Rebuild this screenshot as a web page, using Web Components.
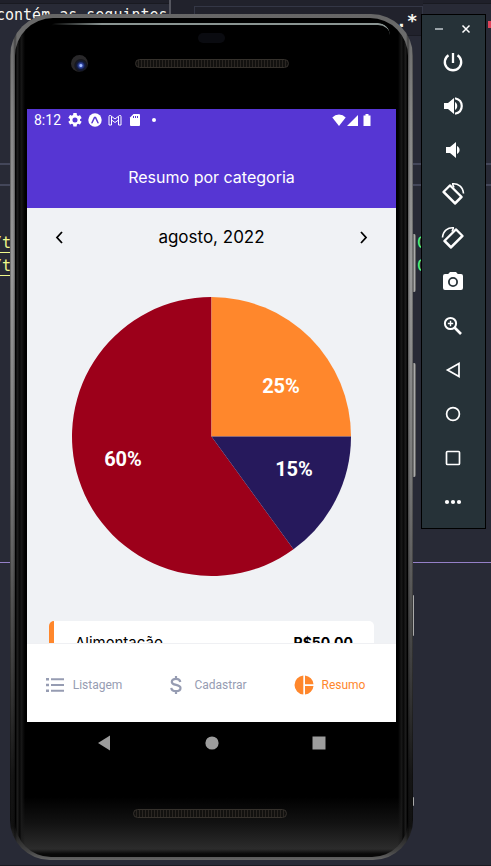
<!DOCTYPE html>
<html lang="pt-BR">
<head>
<meta charset="utf-8">
<meta name="viewport" content="width=device-width, initial-scale=1">
<title>Resumo por categoria</title>
<style>
html, body { margin: 0; height: 100%; background: #282a36; font-family: Roboto, sans-serif; }
</style>
</head>
<body>
<desktop-scene>
  <editor-backdrop slot="backdrop"></editor-backdrop>
  <phone-shell>
    <status-bar></status-bar>
    <app-header>Resumo por categoria</app-header>
    <category-summary month="agosto, 2022">
      <pie-chart></pie-chart>
      <history-card label="Alimentação" amount="R$50,00" color="#ff872c"></history-card>
    </category-summary>
    <tab-bar>
      <tab-item icon="list">Listagem</tab-item>
      <tab-item icon="money">Cadastrar</tab-item>
      <tab-item icon="pie" active>Resumo</tab-item>
    </tab-bar>
  </phone-shell>
  <emulator-toolbar></emulator-toolbar>
</desktop-scene>
<script>
const define = (name, html, setup) => customElements.define(name, class extends HTMLElement {
  constructor() {
    super();
    const t = document.createElement('template');
    t.innerHTML = html;
    this.attachShadow({ mode: 'open' }).append(t.content.cloneNode(true));
  }
  connectedCallback() { if (setup) setup(this, this.shadowRoot); }
});

define('desktop-scene', `<style>
:host { display: flex; position: relative; box-sizing: border-box; height: 100vh; padding: 14px 5px 6px 10px; gap: 8px; align-items: flex-start; overflow: hidden; }
</style><slot name="backdrop"></slot><slot></slot>`);

define('editor-backdrop', `<style>
:host { position: absolute; inset: 0; overflow: hidden; background: #282a36; font: 15px/22px "DejaVu Sans Mono", monospace; color: #f8f8f2; }
div, span { position: absolute; white-space: pre; }
.top { inset: 0 0 auto; height: 3px; background: #1f202a; border-bottom: 1px solid #191a21; }
.text { left: -4px; top: 4px; }
.split { left: 169px; top: 0; width: 2px; height: 16px; background: #55565f; }
.find { left: 171px; right: 68px; top: 0; height: 35px; background: #21222c; border-bottom: 1px solid #1a1b23; }
.find i { position: absolute; inset: 6px 0 0 23px; border: 1px solid #343746; border-bottom: 0; }
.regex { left: 396px; top: 10px; font-weight: bold; font-size: 18px; }
.rule { left: 0; right: 0; height: 2px; background: #44475a; }
.code { left: -7px; color: #f1fa8c; text-decoration: underline; text-underline-offset: 4px; }
.end { left: 417px; color: #50fa7b; }
.mark { right: 0; top: 21px; width: 3px; height: 7px; background: #e0445a; }
.purple { left: 0; right: 0; top: 562px; height: 1px; background: #9580c8; }
.foot { left: 0; right: 0; bottom: 0; height: 1px; background: #191a21; }
</style>
<div class="top"></div><div class="find"><i></i></div><div class="split"></div>
<span class="text">contém as seguintes</span><span class="regex">.*</span>
<div class="mark"></div>
<div class="rule" style="top:163px"></div><div class="rule" style="top:184px"></div>
<span class="code" style="top:232px">/t</span><span class="code" style="top:255px">/t</span>
<span class="end" style="top:232px">C</span><span class="end" style="top:255px">C</span>
<div class="purple"></div><div class="foot"></div>`);

define('phone-shell', `<style>
:host { display: block; position: relative; flex: 1; min-width: 0; height: 100%; }
.edge { box-sizing: border-box; height: 100%; padding: 4px 5px 3px; border-radius: 42px 42px 40px 40px;
  background: linear-gradient(90deg, #0008 0, #0000 1px 3px, #0006 5px, #0000 7px calc(100% - 7px), #0006 calc(100% - 5px), #0000 calc(100% - 3px) calc(100% - 1px), #0008 100%),
    linear-gradient(#666 0, #858585 12%, #999 30%, #777 55%, #3c3c3c 78%, #151515 90%, #111 96%, #444 99%, #666); }
.face { position: relative; box-sizing: border-box; display: flex; flex-direction: column; height: 100%; padding: 0 12px; border-radius: 38px 38px 36px 36px; overflow: hidden;
  background: linear-gradient(90deg, #000 0 1px, #202020 2px, #050505 5px, #1a1a1a 6px, #0000 10px calc(100% - 10px), #1a1a1a calc(100% - 6px), #050505 calc(100% - 5px), #202020 calc(100% - 2px), #000 calc(100% - 1px)),
    linear-gradient(#000 0 calc(100% - 60px), #121212 calc(100% - 34px), #2c2c2c calc(100% - 8px), #080808 calc(100% - 3px)); }
.gloss { position: absolute; inset: 5px 18px auto 36px; height: 10px; border-top: 2px solid #8a9492; border-radius: 12px 34px 0 0; mask-image: linear-gradient(90deg, #0000, #000 15%); }
.top { display: grid; grid-template-columns: 1fr 154px 1fr; align-items: center; height: 91px; flex: none; }
.camera { justify-self: center; width: 17px; height: 17px; margin-right: 2px; border-radius: 50%; background: radial-gradient(circle at 58% 62%, #a5bfff 0 1px, #3348a8 2px, #111a3c 4px, #17171b 6px, #29282a 7px); }
.sensor { justify-self: center; width: 27px; height: 10px; border-radius: 5px; background: #0a0b10; }
.middle { display: grid; gap: 16px; padding-bottom: 26px; }
.speaker { width: 152px; height: 7px; border: 1px solid #35312c; border-radius: 5px; background: repeating-linear-gradient(90deg, #12110f 0 2px, #2a2622 2px 3px); }
.screen { flex: 1; min-height: 0; display: flex; flex-direction: column; background: #f0f2f5; overflow: hidden; }
.keys { display: flex; justify-content: space-between; align-items: center; height: 42px; padding: 0 68px; flex: none; }
.keys button { display: grid; place-items: center; width: 18px; height: 24px; padding: 0; border: 0; background: none; }
.bottom { height: 93px; flex: none; display: grid; justify-content: center; align-content: center; box-sizing: border-box; padding: 6px 4px 0 0; }
svg { display: block; width: 16px; height: 16px; fill: #9d9d9d; }
.nub { position: absolute; left: 100%; width: 3px; background: linear-gradient(90deg, #555, #aaa, #444); border-radius: 0 2px 2px 0; }
</style>
<span class="nub" style="top:220px;height:58px"></span><span class="nub" style="top:349px;height:114px"></span><span class="nub" style="top:581px;height:41px;width:1px"></span><span class="nub" style="top:783px;height:9px;width:1px"></span>
<div class="edge"><div class="face"><div class="gloss"></div>
<div class="top"><span class="camera"></span><div class="middle"><span class="sensor"></span><span class="speaker"></span></div></div>
<div class="screen"><slot></slot></div>
<div class="keys">
<button aria-label="Voltar"><svg viewBox="0 0 16 16"><path d="M2 8 14 .5v15z"/></svg></button>
<button aria-label="Início"><svg viewBox="0 0 16 16"><circle cx="8" cy="8" r="6.6"/></svg></button>
<button aria-label="Recentes"><svg viewBox="0 0 16 16"><path d="M1.5 1.5h13v13h-13z"/></svg></button></div>
<div class="bottom"><span class="speaker"></span></div>
</div></div>`);

define('status-bar', `<style>
:host { display: flex; align-items: center; height: 22px; padding: 0 22px 0 7px; background: #5636d3; color: #fff; font-size: 14px; line-height: 20px; flex: none; }
time { width: 34px; } .left, .right { display: flex; align-items: center; } .left { gap: 6px; } .right { margin-left: auto; }
svg { display: block; width: 14px; height: 14px; fill: #fff; }
</style><time>8:12</time>
<div class="left">
<svg viewBox="2 2 20 20"><path d="M19.14 12.94c.04-.3.06-.61.06-.94s-.02-.64-.07-.94l2.03-1.58c.18-.14.23-.41.12-.61l-1.92-3.32c-.12-.22-.37-.29-.59-.22l-2.39.96c-.5-.38-1.03-.7-1.62-.94l-.36-2.54A.48.48 0 0 0 13.920 2h-3.840c-.24 0-.43.17-.47.41l-.36 2.540c-.59.24-1.130.57-1.620.94l-2.390-.960c-.22-.08-.47 0-.59.22L2.740 8.470c-.12.21-.08.47.12.61l2.030 1.580c-.05.3-.09.63-.09.940s.02.64.07.940l-2.030 1.580c-.18.14-.23.41-.12.61l1.920 3.320c.12.22.37.29.59.22l2.390-.960c.5.38 1.030.7 1.620.940l.36 2.540c.05.24.24.41.48.41h3.840c.24 0 .44-.17.47-.41l.36-2.540c.59-.24 1.130-.56 1.620-.940l2.390.960c.22.08.47 0 .59-.22l1.920-3.320c.12-.22.07-.47-.12-.61zM12 15.600a3.600 3.600 0 1 1 0-7.200 3.600 3.600 0 0 1 0 7.200z"/></svg>
<svg viewBox="0 0 14 14"><circle cx="7" cy="7" r="6.700"/><path d="M4 9.700 6.500 4.500h1L10 9.700" fill="none" stroke="#5636d3" stroke-width="1.500" stroke-linecap="round"/></svg>
<svg viewBox="0 0 14 14"><path d="M1 12V3.500Q1 2 2.500 2.500L7 6l4.500-3.500Q13 2 13 3.500V12h-2.500V7L7 9.500 3.500 7v5zM3.500 7V3.500M10.500 7V3.500" fill="none" stroke="#fff"/></svg>
<svg viewBox="0 0 14 14"><path d="M5.500 1H11a1 1 0 0 1 1 1v10a1 1 0 0 1-1 1H3a1 1 0 0 1-1-1V4.500z"/><path d="M5.500 3v2M7.500 3v2M9.500 3v2" stroke="#5636d3"/></svg>
<svg viewBox="0 0 14 14"><circle cx="6" cy="7" r="2"/></svg></div>
<div class="right"><svg viewBox="0 0 14 14"><path d="M.3 4.500Q3 1.500 7 1.500t6.700 3L7 13z"/></svg>
<svg viewBox="0 0 14 14"><path d="M1 13 12 2v11z"/></svg>
<svg viewBox="0 0 14 14"><path d="M3.500 2.500H5.500V1h3v1.500H10.500v10.500H3.500z"/></svg></div>`);

define('app-header', `<style>
:host { display: block; flex: none; background: #5636d3; }
h1 { margin: 0; padding: 34px 0 19px; font: 400 16px/24px Inter, sans-serif; color: #fff; text-align: center; }
</style><h1><slot></slot></h1>`);

define('category-summary', `<style>
:host { display: block; flex: 1; min-height: 0; overflow: hidden; padding: 0 22px; background: #f0f2f5; }
nav { display: flex; align-items: center; justify-content: space-between; height: 60px; margin-bottom: 29px; }
h2 { margin: 0; padding-bottom: 2px; font: 400 17px/24px Inter, sans-serif; color: #000; }
button { width: 20px; height: 24px; padding: 0; border: 0; background: none; }
svg { display: block; width: 20px; height: 24px; fill: none; stroke: #000; stroke-width: 1.800; }
</style><nav><button aria-label="Mês anterior"><svg viewBox="0 0 20 24"><path d="m13 6-5 5.500 5 5.500"/></svg></button><h2></h2><button aria-label="Próximo mês"><svg viewBox="0 0 20 24"><path d="m7 6 5 5.500-5 5.500"/></svg></button></nav><slot></slot>`,
(el, root) => { root.querySelector('h2').textContent = el.getAttribute('month'); });

define('pie-chart', `<style>
:host { display: block; padding: 0 23px; margin-bottom: 45px; }
svg { display: block; width: 100%; height: auto; }
text { font: 700 20px Roboto, sans-serif; fill: #fff; text-anchor: middle; }
</style><svg viewBox="0 0 279 279" role="img" aria-label="Gastos por categoria">
<path d="M139.500 139.500V0A139.500 139.500 0 1 0 221.500 252.360z" fill="#9c001a"/>
<path d="M139.500 139.500V0A139.500 139.500 0 0 1 279 139.500z" fill="#ff872c"/>
<path d="M139.500 139.500H279A139.500 139.500 0 0 1 221.500 252.360z" fill="#26195c"/>
<text x="209" y="96">25%</text><text x="222" y="179">15%</text><text x="51" y="169">60%</text></svg>`);

define('history-card', `<style>
:host { display: flex; justify-content: space-between; padding: 10px 21px; border-left: 5px solid var(--accent); border-radius: 5px; background: #fff; font: 15px/24px Inter, sans-serif; color: #000; }
strong { font-weight: 700; font-size: 14px; }
</style><span></span><strong></strong>`,
(el, root) => {
  el.style.setProperty('--accent', el.getAttribute('color'));
  root.querySelector('span').textContent = el.getAttribute('label');
  root.querySelector('strong').textContent = el.getAttribute('amount');
});

define('tab-bar', `<style>
:host { display: grid; grid-template-columns: repeat(3, 1fr); flex: none; height: 78px; border-top: 1px solid #eff0f3; background: #fff; }
</style><slot></slot>`);

const tabIcons = {
  list: '<path d="M1 3h3v2.500H1zM1 8.750h3v2.500H1zM1 14.500h3V17H1zM6 3.200h13v2H6zM6 9h13v2H6zM6 14.800h13v2H6z"/>',
  money: '<path d="M10 1v3M10 16v3M14.300 7C14 5 12.500 3.800 10 3.800c-2.600 0-4.200 1.200-4.200 3.100C5.800 11 14.500 8.800 14.500 13c0 2-1.700 3.200-4.500 3.200S5.500 15 5.300 12.900" fill="none" stroke="currentColor" stroke-width="2.200"/>',
  pie: '<path d="M9.300.5v19a9.530 9.530 0 0 1 0-19zM11 .5a9.500 9.500 0 0 1 8.500 8.700H11zM11 10.900h8.500a9.500 9.500 0 0 1-8.500 8.600z"/>'
};
define('tab-item', `<style>
:host { display: flex; color: #969cb2; }
:host([active]) { color: #ff872c; }
button { flex: 1; display: flex; align-items: center; justify-content: center; gap: 8px; padding: 4px 10px 0 0; border: 0; background: none; color: inherit; font: 12px/16px Roboto, sans-serif; }
svg { display: block; width: 20px; height: 20px; fill: currentColor; }
</style><button><svg viewBox="0 0 20 20" aria-hidden="true"></svg><span><slot></slot></span></button>`,
(el, root) => { root.querySelector('svg').innerHTML = tabIcons[el.getAttribute('icon')]; });

define('emulator-toolbar', `<style>
:host { position: relative; display: flex; flex-direction: column; flex: none; box-sizing: border-box; width: 65px; padding: 0 2px 4px 0; border: 1px solid #000; background: #263238; }
.window { display: flex; justify-content: center; gap: 7px; height: 25px; align-items: center; }
button { display: grid; place-items: center; height: 44px; padding: 0; border: 0; background: none; color: #fff; }
.window button { width: 20px; height: 25px; }
svg { display: block; width: 24px; height: 24px; fill: #fff; }
.line { fill: none; stroke: #fff; stroke-width: 2; }
.window svg { width: 14px; height: 14px; fill: none; stroke: #fff; stroke-width: 1.500; }
</style><div class="window"><button aria-label="Minimizar"><svg viewBox="0 0 14 14"><path d="M3 8h8" stroke="#9aa3a8" stroke-width="2"/></svg></button><button aria-label="Fechar"><svg viewBox="0 0 14 14"><path d="m3.500 4.500 7 7m0-7-7 7"/></svg></button></div>
<button aria-label="Ligar"><svg class="line" viewBox="0 0 24 24"><path d="M12 3v10M7.500 5.200a8.200 8.200 0 1 0 9 0" stroke-width="2.300"/></svg></button>
<button aria-label="Aumentar volume"><svg viewBox="0 0 24 24"><path d="M3 9v6h4l6 5V4L7 9zM14 8c3 1.500 3 6.500 0 8z"/><path d="M14 4.200c9 2 9 13.600 0 15.600" fill="none" stroke="#fff" stroke-width="2.200"/></svg></button>
<button aria-label="Diminuir volume"><svg viewBox="0 0 24 24"><path d="M5 9v6h4l6 5V4L9 9zM16 8c3.500 1.500 3.500 6.500 0 8z"/></svg></button>
<button aria-label="Girar à esquerda"><svg viewBox="0 0 24 24"><path d="M8.300 2.600 1.600 9.300a1 1 0 0 0 0 1.400L13.400 22.400a1 1 0 0 0 1.400 0l6.700-6.700a1 1 0 0 0 0-1.400L9.700 2.600a1 1 0 0 0-1.400 0zM9 5l9.800 9.800L14 19.400 4.200 9.700z" fill-rule="evenodd"/><path d="M11 1.800c6-.8 11 3 11.500 9.700M13 5.500 11.500 2" fill="none" stroke="#fff" stroke-width="1.600"/></svg></button>
<button aria-label="Girar à direita"><svg viewBox="0 0 24 24"><g transform="matrix(-1 0 0 1 24 0)"><path d="M8.300 2.600 1.600 9.300a1 1 0 0 0 0 1.400L13.400 22.400a1 1 0 0 0 1.400 0l6.700-6.700a1 1 0 0 0 0-1.400L9.700 2.600a1 1 0 0 0-1.400 0zM9 5l9.800 9.800L14 19.400 4.200 9.700z" fill-rule="evenodd"/><path d="M11 1.800c6-.8 11 3 11.500 9.700M13 5.500 11.500 2" fill="none" stroke="#fff" stroke-width="1.600"/></g></svg></button>
<button aria-label="Capturar tela"><svg viewBox="0 0 24 24"><path d="M9 2 7.200 4H4a2 2 0 0 0-2 2v12a2 2 0 0 0 2 2h16a2 2 0 0 0 2-2V6a2 2 0 0 0-2-2h-3.200L15 2zm3 15a5 5 0 1 1 0-10 5 5 0 0 1 0 10z"/><circle cx="12" cy="12" r="3.200"/></svg></button>
<button aria-label="Ampliar"><svg class="line" viewBox="0 0 24 24"><circle cx="9.500" cy="9.500" r="5.600"/><path d="m13.500 13.500 6.500 6.500" stroke-width="2.600"/><path d="M9.500 6.800v5.400M6.800 9.500h5.400" stroke-width="1.400"/></svg></button>
<button aria-label="Voltar"><svg class="line" viewBox="0 0 24 24"><path d="M18 5.500v13L6.500 12z" stroke-width="1.700"/></svg></button>
<button aria-label="Início"><svg class="line" viewBox="0 0 24 24"><circle cx="12" cy="12" r="6.400" stroke-width="1.700"/></svg></button>
<button aria-label="Visão geral"><svg class="line" viewBox="0 0 24 24"><rect x="5.500" y="5.500" width="13" height="13" rx="1" stroke-width="1.700"/></svg></button>
<button aria-label="Mais"><svg viewBox="0 0 24 24"><circle cx="6" cy="12" r="2.100"/><circle cx="12" cy="12" r="2.100"/><circle cx="18" cy="12" r="2.100"/></svg></button>`);
</script>
</body>
</html>
